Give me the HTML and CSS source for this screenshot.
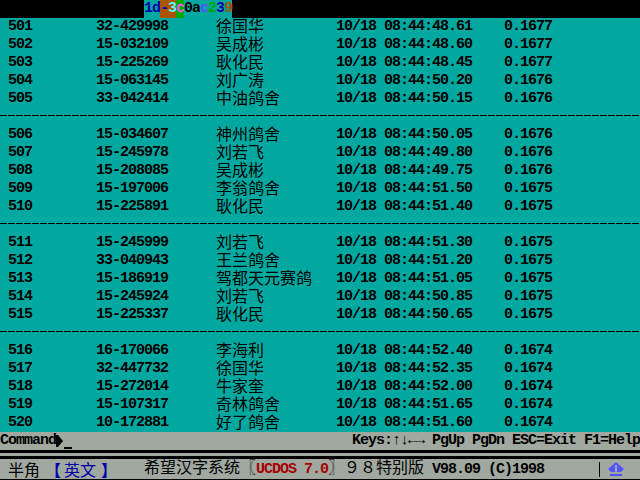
FILE: index.html
```html
<!DOCTYPE html>
<html lang="zh">
<head>
<meta charset="utf-8">
<title>UCDOS</title>
<link rel="stylesheet" href="styles.css">
</head>
<body>
<div class="screen">
  <div class="topbar"><span class="hex"><span class="c-navy">1d</span><span class="c-brown">-<span class="c-cyan">3</span></span><span class="c-green">c</span><span class="c-k">0a</span><span class="c-blue">c</span><span class="c-dgreen">2</span><span class="c-navy">3</span><span class="c-orange">9</span></span></div>
  <div class="table">
    <div class="row"><span>501</span><span>32-429998</span><span class="cn">徐国华</span><span>10/18 08:44:48.61</span><span>0.1677</span></div>
    <div class="row"><span>502</span><span>15-032109</span><span class="cn">吴成彬</span><span>10/18 08:44:48.60</span><span>0.1677</span></div>
    <div class="row"><span>503</span><span>15-225269</span><span class="cn">耿化民</span><span>10/18 08:44:48.45</span><span>0.1677</span></div>
    <div class="row"><span>504</span><span>15-063145</span><span class="cn">刘广涛</span><span>10/18 08:44:50.20</span><span>0.1676</span></div>
    <div class="row"><span>505</span><span>33-042414</span><span class="cn">中油鸽舍</span><span>10/18 08:44:50.15</span><span>0.1676</span></div>
    <div class="sep"></div>
    <div class="row"><span>506</span><span>15-034607</span><span class="cn">神州鸽舍</span><span>10/18 08:44:50.05</span><span>0.1676</span></div>
    <div class="row"><span>507</span><span>15-245978</span><span class="cn">刘若飞</span><span>10/18 08:44:49.80</span><span>0.1676</span></div>
    <div class="row"><span>508</span><span>15-208085</span><span class="cn">吴成彬</span><span>10/18 08:44:49.75</span><span>0.1676</span></div>
    <div class="row"><span>509</span><span>15-197006</span><span class="cn">李翁鸽舍</span><span>10/18 08:44:51.50</span><span>0.1675</span></div>
    <div class="row"><span>510</span><span>15-225891</span><span class="cn">耿化民</span><span>10/18 08:44:51.40</span><span>0.1675</span></div>
    <div class="sep"></div>
    <div class="row"><span>511</span><span>15-245999</span><span class="cn">刘若飞</span><span>10/18 08:44:51.30</span><span>0.1675</span></div>
    <div class="row"><span>512</span><span>33-040943</span><span class="cn">王兰鸽舍</span><span>10/18 08:44:51.20</span><span>0.1675</span></div>
    <div class="row"><span>513</span><span>15-186919</span><span class="cn">驾都天元赛鸽</span><span>10/18 08:44:51.05</span><span>0.1675</span></div>
    <div class="row"><span>514</span><span>15-245924</span><span class="cn">刘若飞</span><span>10/18 08:44:50.85</span><span>0.1675</span></div>
    <div class="row"><span>515</span><span>15-225337</span><span class="cn">耿化民</span><span>10/18 08:44:50.65</span><span>0.1675</span></div>
    <div class="sep"></div>
    <div class="row"><span>516</span><span>16-170066</span><span class="cn">李海利</span><span>10/18 08:44:52.40</span><span>0.1674</span></div>
    <div class="row"><span>517</span><span>32-447732</span><span class="cn">徐国华</span><span>10/18 08:44:52.35</span><span>0.1674</span></div>
    <div class="row"><span>518</span><span>15-272014</span><span class="cn">牛家奎</span><span>10/18 08:44:52.00</span><span>0.1674</span></div>
    <div class="row"><span>519</span><span>15-107317</span><span class="cn">奇林鸽舍</span><span>10/18 08:44:51.65</span><span>0.1674</span></div>
    <div class="row"><span>520</span><span>10-172881</span><span class="cn">好了鸽舍</span><span>10/18 08:44:51.60</span><span>0.1674</span></div>
  </div>
  <div class="command">
    <span class="prompt">Command<svg class="arrow" width="8" height="14" viewBox="0 0 8 14"><path d="M0 1h2l5 6-5 6H0z"/></svg><span class="cursor"></span></span>
    <span>Keys:↑↓←→ PgUp PgDn ESC=Exit F1=Help</span>
  </div>
  <div class="rule"></div>
  <div class="status">
    <span class="half cn">半角</span>
    <span class="lang"><span class="brk brk-l">【</span><span class="cn">英文</span><span class="brk brk-r">】</span></span>
    <span class="title"><span class="cn">希望汉字系统〖</span><span class="red">UCDOS 7.0</span><span class="cn">〗９８特别版</span> V98.09 (C)1998</span>
    <span class="logo"><svg width="16" height="14" viewBox="0 0 16 14"><path d="M8 0l8 7-3 3H9V3H7v7H3L0 7zM2 12h12v2H2z"/></svg></span>
  </div>
</div>
</body>
</html>
```
FILE: styles.css
```css
html, body { margin: 0; padding: 0; background: #000; }
.screen {
  width: 640px; height: 480px; overflow: hidden;
  display: flex; flex-direction: column;
  font: bold 15px/18px "Liberation Mono", monospace;
  letter-spacing: -1px;
  color: #000; background: #00a8a0;
}
.cn {
  font-family: "Noto Sans CJK SC", sans-serif; font-weight: 400; font-size: 16px;
  letter-spacing: 0; line-height: 14px;
}
.topbar { height: 18px; background: #000; padding-left: 144px; flex: none; }
.hex { display: flex; width: 88px; }
.c-navy { color: #0000a8; background: #00a8a0; }
.c-brown { color: #0000a8; background: #a85400; }
.c-cyan { color: #54fcfc; }
.c-green { color: #fc54fc; background: #00a800; }
.c-k { color: #000; background: #00a8a0; }
.c-blue { color: #5454fc; background: #00a8a0; }
.c-dgreen { color: #00a800; background: #00a8a0; }
.c-orange { color: #a85400; background: #00a8a0; }
.table { flex: none; height: 414px; }
.row {
  height: 18px; white-space: pre;
  display: grid; grid-template-columns: 88px 120px 120px 168px 1fr; padding-left: 8px;
}
.sep { height: 18px; box-sizing: border-box; padding-top: 7px; }
.sep::before {
  content: ""; display: block; height: 1px;
  background: repeating-linear-gradient(90deg, #000 0 7px, transparent 7px 8px);
}
.command {
  flex: none; height: 18px; background: #a0a8a0;
  display: flex; justify-content: space-between; white-space: pre;
}
.prompt { display: flex; align-items: flex-start; }
.arrow { margin-top: 2px; fill: #000; }
.cursor { width: 8px; height: 2px; background: #000; margin-top: 15px; }
.rule {
  flex: none; height: 9px;
  background: linear-gradient(#000 0 3px, #a0a8a0 3px 6px, #000 6px 9px);
}
.status {
  flex: 1; background: #a0a8a0; display: flex; align-items: center; white-space: pre;
  border-bottom: 1px solid #000; box-sizing: border-box;
}
.half { margin-left: 8px; width: 40px; }
.lang { display: flex; color: #0000a8; width: 96px; }
.lang .brk { font-family: "Noto Sans CJK SC", sans-serif; font-size: 16px; letter-spacing: 0; line-height: 14px; }
.brk-l { width: 16px; margin-left: -3px; margin-right: 3px; }
.brk-r { width: 16px; margin-left: 5px; margin-right: -5px; }
.title { flex: 1; }
.red { color: #a80000; }
.logo {
  width: 41px; height: 15px; box-sizing: border-box;
  border-left: 1px solid #000; padding-left: 8px; display: flex; fill: #5454fc;
}
```
